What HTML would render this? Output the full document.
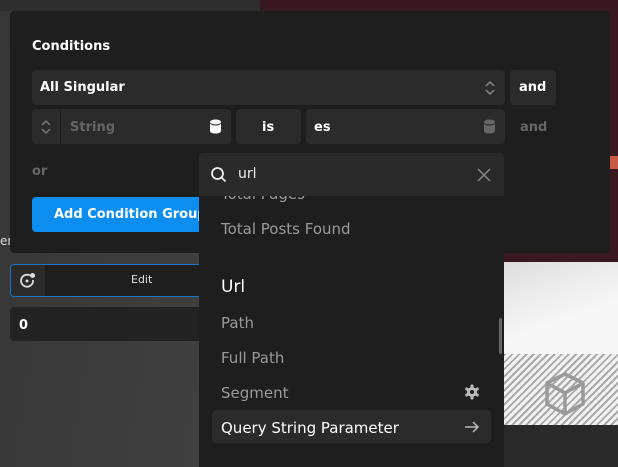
<!DOCTYPE html>
<html><head><style>
*{margin:0;padding:0;box-sizing:border-box}
body{width:618px;height:467px;overflow:hidden;position:relative;font-family:"DejaVu Sans","Liberation Sans",sans-serif;background:linear-gradient(100deg,#363636,#454545 60%,#3a3a3a);}
.a{position:absolute}
.box{position:absolute;background:#2b2b2b;border-radius:4px}
.b{font-weight:bold;color:#fff;font-size:13px}
</style></head><body>
<div class="a" style="left:0;top:0;width:260px;height:11px;background:#2e2e2e"></div>
<div class="a" style="left:260px;top:0;width:358px;height:262px;background:#3a1820"></div>
<div class="a" style="left:610px;top:156px;width:8px;height:13px;background:#c95a45"></div>
<div class="a" style="left:504px;top:262px;width:114px;height:92px;background:linear-gradient(160deg,#dedede,#f7f7f7 60%)"></div>
<div class="a" style="left:504px;top:354px;width:114px;height:71px;background:repeating-linear-gradient(135deg,#aaa 0 2px,#f2f2f2 2px 5px)"></div>
<svg class="a" style="left:542px;top:371px" width="46" height="46" viewBox="0 0 46 46"><g fill="none" stroke="#9a9a9a" stroke-width="3.5" stroke-linejoin="round"><path d="M23 3 41 12 41 33 23 43 5 33 5 12Z"/><path d="M5 12 23 22 41 12M23 22V43"/></g></svg>
<div class="a" style="left:504px;top:425px;width:114px;height:42px;background:#2a2a2a"></div>
<div class="a" style="left:0;top:234px;font-size:12px;color:#ddd">en</div>

<div class="a" style="left:10px;top:11px;width:600px;height:242px;background:#1e1e1e;border-radius:4px"></div>
<div class="a b" style="left:32px;top:39px">Conditions</div>
<div class="box" style="left:32px;top:70px;width:473px;height:35px"></div>
<div class="a b" style="left:40px;top:80px">All Singular</div>
<svg class="a" style="left:484px;top:80px" width="12" height="16" viewBox="0 0 12 16"><path d="M2 6l4-4 4 4M2 10l4 4 4-4" fill="none" stroke="#888" stroke-width="1.5"/></svg>
<div class="box" style="left:510px;top:70px;width:46px;height:35px"></div>
<div class="a b" style="left:519px;top:80px">and</div>

<div class="box" style="left:32px;top:109px;width:199px;height:35px"></div>
<div class="a" style="left:60px;top:109px;width:1px;height:35px;background:#1e1e1e"></div>
<svg class="a" style="left:40px;top:119px" width="12" height="16" viewBox="0 0 12 16"><path d="M2 6l4-4 4 4M2 10l4 4 4-4" fill="none" stroke="#777" stroke-width="1.5"/></svg>
<div class="a" style="left:70px;top:120px;font-size:13px;font-weight:bold;color:#666">String</div>
<svg class="a" style="left:209px;top:119px" width="13" height="15" viewBox="0 0 13 15"><ellipse cx="6.5" cy="3" rx="5.5" ry="2.5" fill="#fff"/><path d="M1 4v8c0 1.5 2.5 2.5 5.5 2.5S12 13.5 12 12V4c0 1.5-2.5 2.5-5.5 2.5S1 5.5 1 4z" fill="#fff"/></svg>
<div class="box" style="left:236px;top:109px;width:65px;height:35px"></div>
<div class="a b" style="left:262px;top:120px">is</div>
<div class="box" style="left:306px;top:109px;width:199px;height:35px"></div>
<div class="a b" style="left:314px;top:120px">es</div>
<svg class="a" style="left:483px;top:119px" width="13" height="15" viewBox="0 0 13 15"><ellipse cx="6.5" cy="3" rx="5.5" ry="2.5" fill="#666"/><path d="M1 4v8c0 1.5 2.5 2.5 5.5 2.5S12 13.5 12 12V4c0 1.5-2.5 2.5-5.5 2.5S1 5.5 1 4z" fill="#666"/></svg>
<div class="a" style="left:520px;top:120px;font-size:13px;font-weight:bold;color:#666">and</div>
<div class="a" style="left:32px;top:164px;font-size:13px;font-weight:bold;color:#666">or</div>
<div class="a" style="left:32px;top:197px;width:200px;height:35px;background:#0b8ef0;border-radius:4px"></div>
<div class="a b" style="left:54px;top:207px">Add Condition Group</div>

<div class="a" style="left:10px;top:264px;width:200px;height:33px;background:#1f1f1f;border:1px solid #1778c9;border-radius:4px"></div>
<div class="a" style="left:11px;top:265px;width:34px;height:31px;background:#2b2b2b;border-radius:3px 0 0 3px"></div>
<svg class="a" style="left:19px;top:272px" width="17" height="17" viewBox="0 0 17 17"><path d="M11 3.5A6 6 0 1 0 14 8" fill="none" stroke="#ddd" stroke-width="1.8"/><circle cx="8" cy="9" r="1.5" fill="#ddd"/><circle cx="13.5" cy="3.5" r="2.5" fill="#ddd"/></svg>
<div class="a" style="left:131px;top:273px;font-size:11px;color:#ddd">Edit</div>
<div class="a" style="left:10px;top:307px;width:200px;height:34px;background:#232323;border-radius:4px"></div>
<div class="a b" style="left:19px;top:318px">0</div>

<div class="a" style="left:199px;top:153px;width:305px;height:314px;background:#1e1e1e;overflow:hidden;border-radius:4px 4px 0 0">
 <div class="a" style="left:0;top:0;width:305px;height:43px;background:#2a2a2a;z-index:2"></div>
 <svg class="a" style="left:11px;top:13px;z-index:3" width="18" height="18" viewBox="0 0 18 18"><circle cx="7.5" cy="7.5" r="5.5" fill="none" stroke="#eee" stroke-width="1.8"/><path d="M11.5 11.5l4 4" stroke="#eee" stroke-width="1.8"/></svg>
 <div class="a" style="left:39px;top:13px;font-size:14px;color:#eee;z-index:3">url</div>
 <svg class="a" style="left:278px;top:15px;z-index:3" width="14" height="14" viewBox="0 0 14 14"><path d="M1 1l12 12M13 1L1 13" stroke="#888" stroke-width="1.5"/></svg>
 <div class="a" style="left:22px;top:32px;font-size:15px;color:#9a9a9a">Total Pages</div>
 <div class="a" style="left:22px;top:67px;font-size:15px;color:#9a9a9a">Total Posts Found</div>
 <div class="a" style="left:22px;top:124px;font-size:17px;color:#fff">Url</div>
 <div class="a" style="left:22px;top:161px;font-size:15px;color:#9a9a9a">Path</div>
 <div class="a" style="left:22px;top:196px;font-size:15px;color:#9a9a9a">Full Path</div>
 <div class="a" style="left:22px;top:231px;font-size:15px;color:#9a9a9a">Segment</div>
 <svg class="a" style="left:265px;top:231px" width="16" height="16" viewBox="0 0 16 16"><g fill="#bbb"><circle cx="8" cy="8" r="5"/><rect x="6.5" y="0.5" width="3" height="15" rx="1"/><rect x="6.5" y="0.5" width="3" height="15" rx="1" transform="rotate(60 8 8)"/><rect x="6.5" y="0.5" width="3" height="15" rx="1" transform="rotate(120 8 8)"/></g><circle cx="8" cy="8" r="2" fill="#1e1e1e"/></svg>
 <div class="a" style="left:13px;top:257px;width:279px;height:33px;background:#2b2b2b;border-radius:4px"></div>
 <div class="a" style="left:22px;top:266px;font-size:15px;color:#fff">Query String Parameter</div>
 <svg class="a" style="left:265px;top:266px" width="16" height="16" viewBox="0 0 16 16"><path d="M1 8h13M9 3l5 5-5 5" fill="none" stroke="#bbb" stroke-width="1.5"/></svg>
 <div class="a" style="left:300px;top:165px;width:3px;height:36px;background:#666;border-radius:2px"></div>
</div>
</body></html>
